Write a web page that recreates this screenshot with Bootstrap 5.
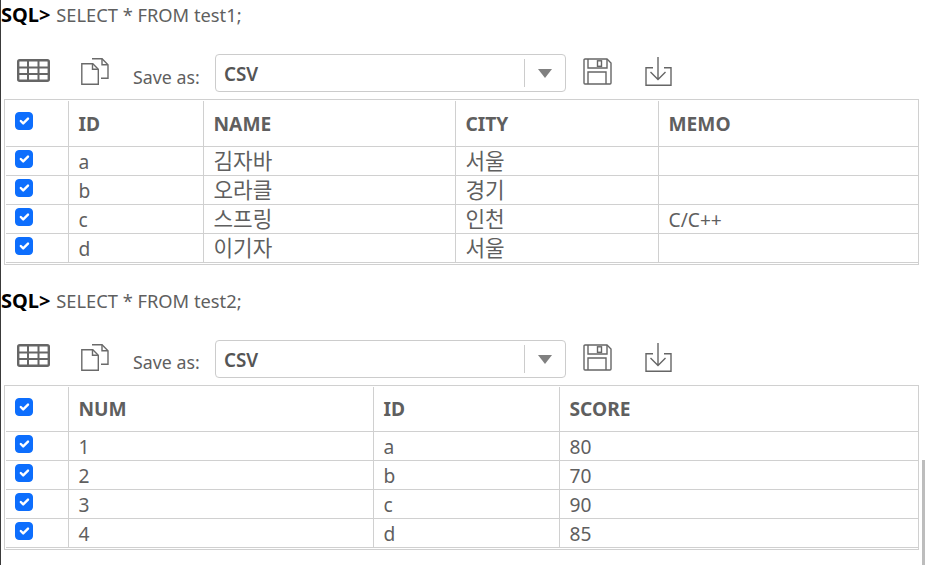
<!DOCTYPE html>
<html lang="ko">
<head>
<meta charset="utf-8">
<title>SQL</title>
<link rel="stylesheet" href="https://cdn.jsdelivr.net/npm/bootstrap@5.3.0/dist/css/bootstrap.min.css">
<style>
html,body{height:565px;overflow:hidden;background:#fff}
body{font-family:"Noto Sans","Noto Sans CJK KR",sans-serif;color:#5f5f5f;font-size:18px;line-height:24px}
.sheet{height:565px;border-left:1px solid #3a3a3a;position:relative}
.sql-line{height:30px;font-size:18.3px;line-height:30px;white-space:nowrap}
.sql-line b{color:#000;font-weight:700;font-size:20px;margin-right:1px}
.tools{height:38px;margin-top:24px;padding-left:16px}
.tool-a{width:33px;margin-right:31px;flex:none;margin-bottom:6px}
.tool-b{width:28px;flex:none;margin-right:24px;margin-bottom:3px}
.save-lbl{width:82px;flex:none;font-size:17.8px;padding-top:7px}
.combo{width:351px;height:38px;border:1px solid #ccc;border-radius:4px;flex:none;padding-left:8px;font-weight:600;font-size:18.8px;color:#555}
.combo>span:first-child{padding-top:2px}
.combo-sep{width:1px;height:28px;background:#ccc;margin-left:auto}
.combo-arrow{width:40px;display:flex;justify-content:center;padding-top:1px}
.tool-c{margin-left:17px;width:29px;flex:none;margin-bottom:3px}
.tool-d{margin-left:33px;width:28px;flex:none;margin-bottom:3px}
.grid-wrap{margin:7px 6px 0 3px;width:915px;border:1px solid #d0d0d0;border-bottom-width:1px;padding:1px 0 1px 1px}
.grid-tbl{table-layout:fixed;width:100%;border-collapse:collapse;margin:0}
.grid-tbl th,.grid-tbl td{border:1px solid #d0d0d0;padding:0 10px;font-size:19.2px;color:#5f5f5f;background:transparent;box-shadow:none;vertical-align:middle}
.grid-tbl tr>*:first-child{border-left:0;padding:0 0 0 9px;vertical-align:top}
.grid-tbl tr>*:last-child{border-right:0}
.grid-tbl thead tr:first-child th{border-top:0;height:45px;font-weight:700;line-height:24px;padding-top:1px}
.grid-tbl tbody td{height:29px;line-height:26px;padding-top:2px}
.grid-tbl .ko-txt{font-size:21.300px;line-height:1}
.grid-tbl input.form-check-input{width:18px;height:18px;margin:0;display:block;border-radius:4px}
.grid-tbl th input.form-check-input{margin-top:10px}
.grid-tbl td input.form-check-input{margin-top:3px}
.block-two{margin-top:21px}
.scroll-thumb{position:absolute;right:0;top:460px;bottom:0;width:3px;background:#bdbdbd}
</style>
</head>
<body>
<div class="sheet">
  <div class="sql-line"><b>SQL&gt;</b> SELECT * FROM test1;</div>
  <div class="tools d-flex align-items-center">
    <svg class="tool-a" width="33" height="23" viewBox="0 0 33 23" fill="none" stroke="#666"><rect x="1.200" y="1.200" width="30.600" height="20.600" rx="1.500" stroke-width="2.400"/><path stroke-width="2" d="M1 8.500h31M1 15h31M11 1v21M21.500 1v21"/></svg>
    <svg class="tool-b" width="28" height="27" viewBox="0 0 28 27" fill="none" stroke="#6a6a6a" stroke-width="1.400"><path d="M11 .8h10l6 6v13.500h-7"/><path d="M21 .8v6h6"/><path d="M.8 5.800h11l5.500 5.500v15H.800z"/><path d="M11.500 5.800v5.500h5.500"/></svg>
    <span class="save-lbl">Save as:</span>
    <div class="combo d-flex align-items-center"><span>CSV</span><span class="combo-sep"></span><span class="combo-arrow"><svg width="14" height="9" viewBox="0 0 14 9"><path d="M0 0h14L7 9z" fill="#808080"/></svg></span></div>
    <svg class="tool-c" width="29" height="27" viewBox="0 0 29 27" fill="none" stroke="#666" stroke-width="1.400"><path d="M1 2a1 1 0 0 1 1-1h22l4 4v20a1 1 0 0 1-1 1H2a1 1 0 0 1-1-1z"/><path d="M5 1v9h19V1"/><rect x="14.500" y="2.800" width="4" height="5.500"/><path d="M5 26V14h18v12"/></svg>
    <svg class="tool-d" width="28" height="29" viewBox="0 0 28 29" fill="none" stroke="#666" stroke-width="1.400"><path d="M13 0v22M5.500 15l7.500 7.500 7.500-7.500"/><path d="M8 10.700H1v17.600h25V10.700h-7"/></svg>
  </div>
  <div class="grid-wrap">
    <table class="table grid-tbl">
      <colgroup><col style="width:62px"><col style="width:135px"><col style="width:252px"><col style="width:203px"><col></colgroup>
      <thead><tr><th><input class="form-check-input" type="checkbox" checked></th><th>ID</th><th>NAME</th><th>CITY</th><th>MEMO</th></tr></thead>
      <tbody>
        <tr><td><input class="form-check-input" type="checkbox" checked></td><td>a</td><td><span class="ko-txt">김자바</span></td><td><span class="ko-txt">서울</span></td><td></td></tr>
        <tr><td><input class="form-check-input" type="checkbox" checked></td><td>b</td><td><span class="ko-txt">오라클</span></td><td><span class="ko-txt">경기</span></td><td></td></tr>
        <tr><td><input class="form-check-input" type="checkbox" checked></td><td>c</td><td><span class="ko-txt">스프링</span></td><td><span class="ko-txt">인천</span></td><td>C/C++</td></tr>
        <tr><td><input class="form-check-input" type="checkbox" checked></td><td>d</td><td><span class="ko-txt">이기자</span></td><td><span class="ko-txt">서울</span></td><td></td></tr>
      </tbody>
    </table>
  </div>
  <div class="block-two">
  <div class="sql-line"><b>SQL&gt;</b> SELECT * FROM test2;</div>
  <div class="tools d-flex align-items-center">
    <svg class="tool-a" width="33" height="23" viewBox="0 0 33 23" fill="none" stroke="#666"><rect x="1.200" y="1.200" width="30.600" height="20.600" rx="1.500" stroke-width="2.400"/><path stroke-width="2" d="M1 8.500h31M1 15h31M11 1v21M21.500 1v21"/></svg>
    <svg class="tool-b" width="28" height="27" viewBox="0 0 28 27" fill="none" stroke="#6a6a6a" stroke-width="1.400"><path d="M11 .8h10l6 6v13.500h-7"/><path d="M21 .8v6h6"/><path d="M.8 5.800h11l5.500 5.500v15H.800z"/><path d="M11.500 5.800v5.500h5.500"/></svg>
    <span class="save-lbl">Save as:</span>
    <div class="combo d-flex align-items-center"><span>CSV</span><span class="combo-sep"></span><span class="combo-arrow"><svg width="14" height="9" viewBox="0 0 14 9"><path d="M0 0h14L7 9z" fill="#808080"/></svg></span></div>
    <svg class="tool-c" width="29" height="27" viewBox="0 0 29 27" fill="none" stroke="#666" stroke-width="1.400"><path d="M1 2a1 1 0 0 1 1-1h22l4 4v20a1 1 0 0 1-1 1H2a1 1 0 0 1-1-1z"/><path d="M5 1v9h19V1"/><rect x="14.500" y="2.800" width="4" height="5.500"/><path d="M5 26V14h18v12"/></svg>
    <svg class="tool-d" width="28" height="29" viewBox="0 0 28 29" fill="none" stroke="#666" stroke-width="1.400"><path d="M13 0v22M5.500 15l7.500 7.500 7.500-7.500"/><path d="M8 10.700H1v17.600h25V10.700h-7"/></svg>
  </div>
  <div class="grid-wrap">
    <table class="table grid-tbl">
      <colgroup><col style="width:62px"><col style="width:305px"><col style="width:186px"><col></colgroup>
      <thead><tr><th><input class="form-check-input" type="checkbox" checked></th><th>NUM</th><th>ID</th><th>SCORE</th></tr></thead>
      <tbody>
        <tr><td><input class="form-check-input" type="checkbox" checked></td><td>1</td><td>a</td><td>80</td></tr>
        <tr><td><input class="form-check-input" type="checkbox" checked></td><td>2</td><td>b</td><td>70</td></tr>
        <tr><td><input class="form-check-input" type="checkbox" checked></td><td>3</td><td>c</td><td>90</td></tr>
        <tr><td><input class="form-check-input" type="checkbox" checked></td><td>4</td><td>d</td><td>85</td></tr>
      </tbody>
    </table>
  </div>
  </div>
  <div class="scroll-thumb"></div>
</div>
<script src="https://cdn.jsdelivr.net/npm/bootstrap@5.3.0/dist/js/bootstrap.bundle.min.js"></script>
</body>
</html>
